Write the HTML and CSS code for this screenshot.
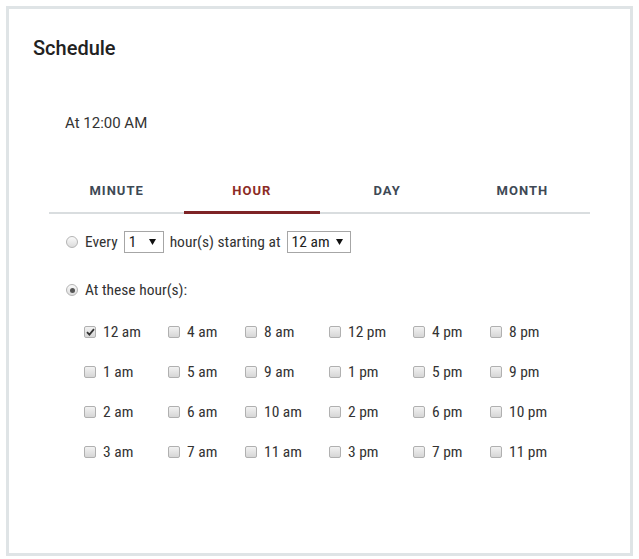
FILE: index.html
```html
<!DOCTYPE html>
<html lang="en">
<head>
<meta charset="utf-8">
<title>Schedule</title>
<link rel="stylesheet" href="styles.css">
</head>
<body>
<div class="card">
  <h2 class="title">Schedule</h2>
  <p class="summary">At 12:00 AM</p>

  <div class="tabs">
    <div class="tab">Minute</div>
    <div class="tab active">Hour</div>
    <div class="tab">Day</div>
    <div class="tab">Month</div>
  </div>

  <div class="options">
    <div class="radio-row">
      <span class="radio"></span>
      <span>Every</span>
      <span class="select sel-num"><span>1</span><svg class="caret" width="7" height="6" viewBox="0 0 7 6"><path d="M0 0H7L3.5 6Z" fill="#111"/></svg></span>
      <span>hour(s) starting at</span>
      <span class="select sel-hour"><span>12 am</span><svg class="caret" width="7" height="6" viewBox="0 0 7 6"><path d="M0 0H7L3.5 6Z" fill="#111"/></svg></span>
    </div>
    <div class="radio-row second">
      <span class="radio checked"></span>
      <span>At these hour(s):</span>
    </div>

    <div class="hours">
      <label class="hour"><span class="box checked"><svg width="9" height="8" viewBox="0 0 9 8"><path d="M1 4.2L3.4 6.6L8 1.2" fill="none" stroke="#333" stroke-width="1.8"/></svg></span>12 am</label>
      <label class="hour"><span class="box"></span>4 am</label>
      <label class="hour"><span class="box"></span>8 am</label>
      <label class="hour"><span class="box"></span>12 pm</label>
      <label class="hour"><span class="box"></span>4 pm</label>
      <label class="hour"><span class="box"></span>8 pm</label>

      <label class="hour"><span class="box"></span>1 am</label>
      <label class="hour"><span class="box"></span>5 am</label>
      <label class="hour"><span class="box"></span>9 am</label>
      <label class="hour"><span class="box"></span>1 pm</label>
      <label class="hour"><span class="box"></span>5 pm</label>
      <label class="hour"><span class="box"></span>9 pm</label>

      <label class="hour"><span class="box"></span>2 am</label>
      <label class="hour"><span class="box"></span>6 am</label>
      <label class="hour"><span class="box"></span>10 am</label>
      <label class="hour"><span class="box"></span>2 pm</label>
      <label class="hour"><span class="box"></span>6 pm</label>
      <label class="hour"><span class="box"></span>10 pm</label>

      <label class="hour"><span class="box"></span>3 am</label>
      <label class="hour"><span class="box"></span>7 am</label>
      <label class="hour"><span class="box"></span>11 am</label>
      <label class="hour"><span class="box"></span>3 pm</label>
      <label class="hour"><span class="box"></span>7 pm</label>
      <label class="hour"><span class="box"></span>11 pm</label>
    </div>
  </div>
</div>
</body>
</html>
```

FILE: styles.css
```css
* { box-sizing: border-box; }

html, body {
  margin: 0;
  padding: 0;
  background: #ffffff;
}

body {
  font-family: Roboto, "Liberation Sans", sans-serif;
  color: #333;
}

.card {
  margin: 6px;
  width: 627px;
  height: 550px;
  border: 3px solid #dfe4e6;
  padding: 27px 24px 0 24px;
  background: #fff;
}

.title {
  margin: 0;
  font-size: 20px;
  line-height: 24px;
  font-weight: 500;
  color: #222;
}

.summary {
  margin: 53px 0 0 32px;
  font-size: 15px;
  line-height: 20px;
  color: #333;
}

.tabs {
  display: flex;
  margin: 38px 0 0 16px;
  width: 541px;
  border-bottom: 2px solid #d9dddf;
}

.tab {
  flex: 1 1 0;
  text-align: center;
  font-size: 13px;
  line-height: 16px;
  font-weight: 700;
  letter-spacing: 1px;
  text-transform: uppercase;
  color: #3e4955;
  padding: 12px 0 12px 0;
  border-bottom: 3px solid transparent;
  margin-bottom: -2px;
}

.tab.active {
  color: #8c2b25;
  border-bottom-color: #7e2326;
}

.options {
  margin: 17px 0 0 33px;
  font-family: "Roboto Condensed", "Liberation Sans Narrow", Roboto, sans-serif;
  font-size: 15.5px;
  color: #333;
}

.radio-row {
  display: flex;
  align-items: center;
  height: 22px;
  gap: 6px;
}

.radio-row.second {
  margin-top: 26px;
}

.radio {
  width: 12px;
  height: 12px;
  border-radius: 50%;
  border: 1px solid #b4b4b4;
  background: linear-gradient(#fafafa, #dcdcdc);
  margin-right: 1px;
  position: relative;
  flex: none;
}

.radio.checked::after {
  content: "";
  position: absolute;
  left: 2.5px;
  top: 2.5px;
  width: 5px;
  height: 5px;
  border-radius: 50%;
  background: #555;
}

.select {
  display: inline-flex;
  align-items: center;
  justify-content: space-between;
  height: 22px;
  border: 1px solid #a6a6a6;
  background: #fff;
  padding: 0 7px 0 4px;
  color: #222;
}

.sel-num { width: 40px; }
.sel-hour { width: 64px; }

.caret { display: block; }

.hours {
  display: grid;
  grid-template-columns: 84px 77px 84px 84px 77px auto;
  grid-auto-rows: 40px;
  margin: 11px 0 0 18px;
}

.hour {
  display: flex;
  align-items: center;
  gap: 7px;
  color: #333;
}

.box {
  width: 12px;
  height: 12px;
  border: 1px solid #b0b0b0;
  border-radius: 2px;
  background: linear-gradient(#f2f2f2, #d6d6d6);
  display: flex;
  align-items: center;
  justify-content: center;
  flex: none;
}
```
